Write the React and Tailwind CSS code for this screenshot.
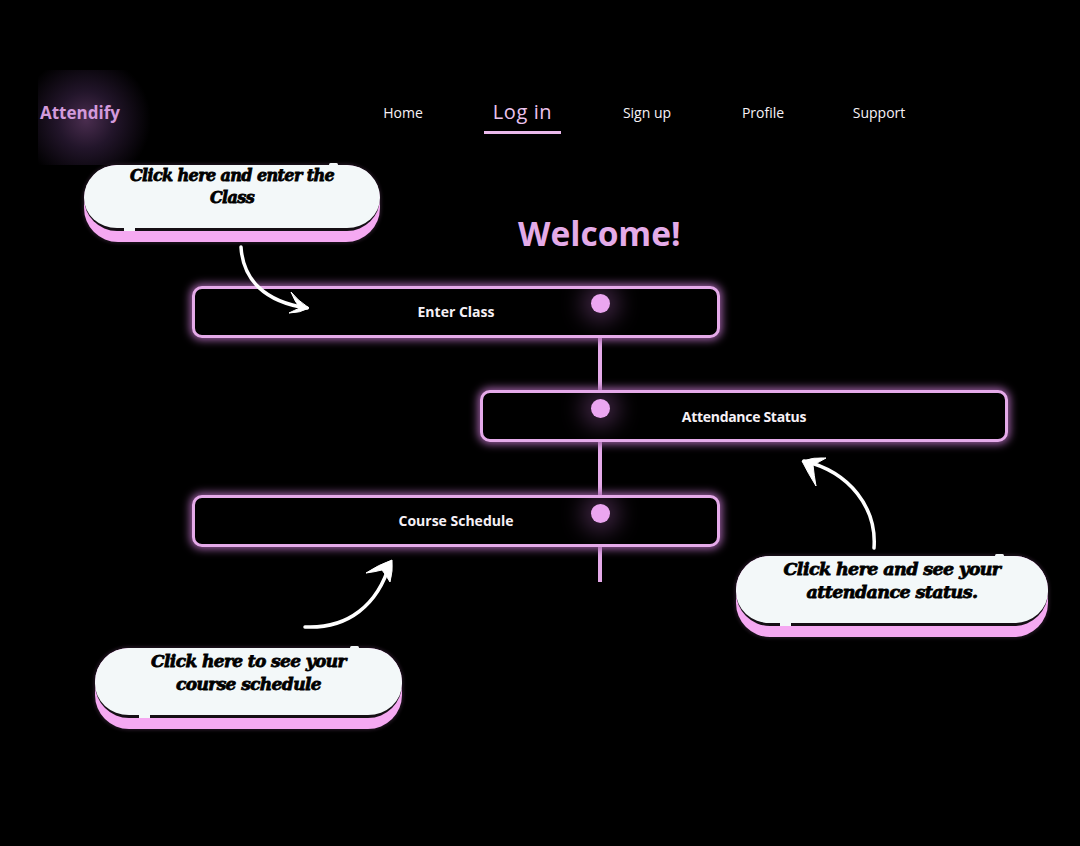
const sans = "font-['Open_Sans',sans-serif]";

function Callout({ className, lines, topNick, bottomNick, textClass }) {
  return (
    <div className={`absolute rounded-[34px] bg-[#f5a9f2] shadow-[0_0_3px_2px_#1c121c] ${className}`}>
      <div className="relative flex h-[calc(100%-11px)] flex-col items-center rounded-[34px] border-b-[3px] border-[#150f15] bg-[#f3f8f9] font-['DejaVu_Serif',serif] font-bold tracking-[-0.6px] text-black italic [-webkit-text-stroke:0.8px_black]">
        <div className={`flex flex-col items-center ${textClass}`}>
          {lines.map((line) => (
            <span key={line}>{line}</span>
          ))}
        </div>
        <span className={`absolute -top-[2px] h-[3px] w-[9px] rounded-sm bg-[#f3f8f9] ${topNick}`} />
        <span className={`absolute -bottom-[3px] h-[4px] w-[11px] bg-[#f3f8f9] ${bottomNick}`} />
      </div>
    </div>
  );
}

function Arrow({ className, width, height, shaft, head }) {
  return (
    <svg className={`absolute ${className}`} width={width} height={height} viewBox={`0 0 ${width} ${height}`}>
      <path d={shaft} fill="none" stroke="white" strokeWidth="3.5" strokeLinecap="round" />
      <path d={head} fill="white" stroke="white" strokeWidth="1" strokeLinejoin="round" />
    </svg>
  );
}

function Step({ label, className, dotClass, textClass }) {
  return (
    <div
      className={`relative h-[52px] w-[528px] rounded-[10px] border-[3px] border-[#e5aae9] bg-black shadow-[0_0_8px_2px_#a061a8] ${className}`}
    >
      <div className="absolute inset-0 overflow-hidden rounded-[7px]">
        <span
          className={`absolute size-[19px] rounded-full bg-[#eba6f0] shadow-[0_0_22px_9px_#402644] ${dotClass}`}
        />
      </div>
      <span
        className={`absolute inset-x-0 text-center text-[14px] leading-[18px] font-bold text-[#f6f0f6] ${textClass}`}
      >
        {label}
      </span>
    </div>
  );
}

function Connector({ className }) {
  return <div className={`ml-[406px] w-[4px] bg-[#e5aae9] ${className}`} />;
}

export default function App() {
  return (
    <div className={`relative h-[846px] w-[1080px] overflow-hidden bg-black ${sans}`}>
      <header className="flex h-[165px] pt-[70px]">
        <div className="ml-[38px] h-[95px] w-[112px] bg-[radial-gradient(circle_at_48px_50px,#4a2d4f_0%,#22152a_35%,#000000_80%)] pt-[33px] pl-[2px] text-[17px] leading-[20px] font-bold text-[#d39adb]">
          Attendify
        </div>
        <nav className="ml-[203px] flex h-[66px] text-[14px] leading-[18px] text-[#f7f2f7]">
          <a className="mt-[34px] w-[100px] text-center">Home</a>
          <a className="mt-[27px] ml-[31px] h-[37px] w-[77px] border-b-[3px] border-[#eab9ec] text-center text-[20px] leading-[30px] tracking-[0.6px] text-[#ecc3ee]">
            Log in
          </a>
          <a className="mt-[34px] ml-[36px] w-[100px] text-center">Sign up</a>
          <a className="mt-[34px] ml-[16px] w-[100px] text-center">Profile</a>
          <a className="mt-[34px] ml-[16px] w-[100px] text-center">Support</a>
        </nav>
      </header>

      <h1 className="mt-[46px] ml-[518px] text-[33.5px] leading-[44px] font-bold text-[#e4abe8]">Welcome!</h1>

      <main className="mt-[31px] ml-[192px] flex w-[816px] flex-col">
        <Step label="Enter Class" dotClass="top-[5px] left-[396px]" textClass="top-[14px]" />
        <Connector className="h-[52px]" />
        <Step
          label="Attendance Status"
          className="ml-[288px]"
          dotClass="top-[6px] left-[108px]"
          textClass="top-[15px] tracking-[-0.3px]"
        />
        <Connector className="h-[53px]" />
        <Step label="Course Schedule" dotClass="top-[6px] left-[396px]" textClass="top-[14px]" />
        <Connector className="h-[35px]" />
      </main>

      <Callout
        className="top-[165px] left-[84px] h-[77px] w-[296px]"
        lines={["Click here and enter the", "Class"]}
        topNick="left-[245px]"
        bottomNick="left-[40px]"
        textClass="text-[16px] leading-[22px]"
      />
      <Callout
        className="top-[556px] left-[736px] h-[81px] w-[312px]"
        lines={["Click here and see your", "attendance status."]}
        topNick="left-[259px]"
        bottomNick="left-[44px]"
        textClass="mt-[2px] text-[17.5px] leading-[23px]"
      />
      <Callout
        className="top-[648px] left-[95px] h-[81px] w-[307px]"
        lines={["Click here to see your", "course schedule"]}
        topNick="left-[255px]"
        bottomNick="left-[44px]"
        textClass="mt-[2px] text-[17px] leading-[23px]"
      />

      <Arrow
        className="top-[240px] left-[235px]"
        width={80}
        height={80}
        shaft="M6 7 C8 40 30 62 72 68"
        head="M56 52 Q62 60 74 68 Q65 73 54 73 Q60 70 65 68 Q60 62 56 52Z"
      />
      <Arrow
        className="top-[450px] left-[795px]"
        width={85}
        height={105}
        shaft="M79 98 C82 58 55 22 9 11"
        head="M7 11 Q19 7 31 8 Q24 12 18 15 Q19 25 21 36 Q13 23 7 11Z"
      />
      <Arrow
        className="top-[555px] left-[298px]"
        width={100}
        height={78}
        shaft="M7 72 C50 74 80 50 92 8"
        head="M94 5 Q80 10 68 18 Q76 17 84 15 Q88 20 92 27 Q95 16 94 5Z"
      />
    </div>
  );
}
